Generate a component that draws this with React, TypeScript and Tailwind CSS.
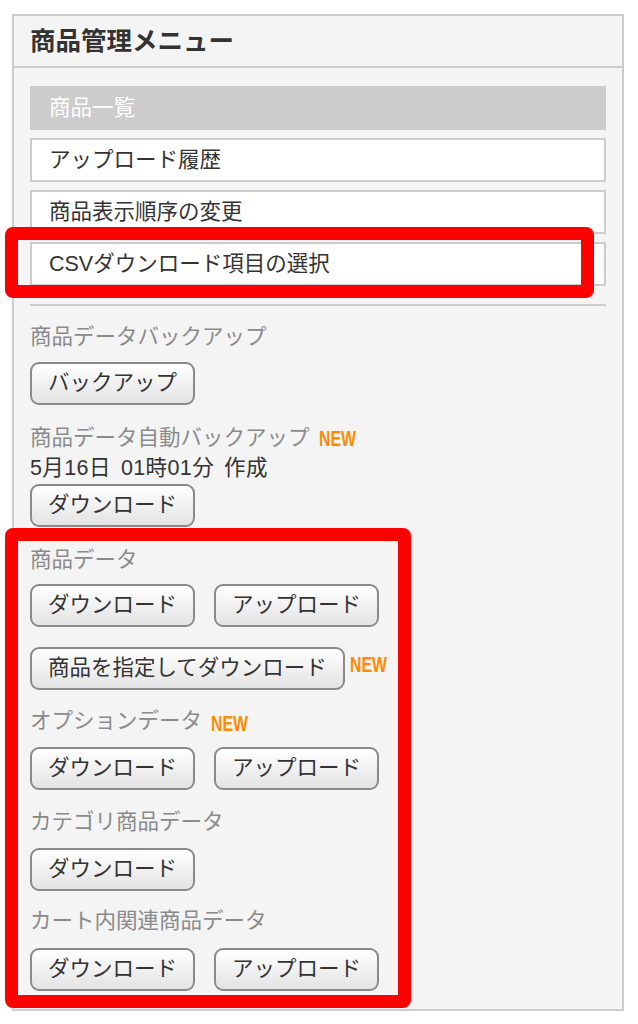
import type { ReactNode } from "react";

const menuItems = ["アップロード履歴", "商品表示順序の変更", "CSVダウンロード項目の選択"];

function Btn({ children }: { children: ReactNode }) {
  return (
    <button className="h-[43px] shrink-0 rounded-[9px] border-2 border-[#8a8a8a] bg-linear-to-b from-white to-[#e3e3e3] px-4 text-[21.5px] leading-none text-[#333]">
      {children}
    </button>
  );
}

function New({ className = "" }: { className?: string }) {
  return (
    <span
      className={`inline-block w-[38px] origin-left scale-x-[0.72] font-['Liberation_Sans',sans-serif] text-[22px] font-bold leading-none text-[#ff8a00] ${className}`}
    >
      NEW
    </span>
  );
}

function Label({ children, className = "" }: { children: ReactNode; className?: string }) {
  return <p className={`text-[21.5px] leading-[30px] text-[#8a8a8a] ${className}`}>{children}</p>;
}

export default function App() {
  return (
    <div className="relative h-[1024px] w-[638px] bg-white pt-[14px] font-['Liberation_Sans','Noto_Sans_CJK_JP',sans-serif]">
      {/* panel */}
      <div className="ml-3 w-[612px] border-2 border-[#cccccc] bg-[#f4f4f4]">
        <div className="flex h-[50px] items-center px-4 text-[25.5px] font-bold text-[#333]">商品管理メニュー</div>
        <div className="border-t-2 border-[#cccccc] px-4 pb-[18px] pt-[18px]">
          {/* menu */}
          <div className="flex flex-col gap-2">
            <div className="flex h-[44px] items-center border-2 border-[#cccccc] bg-[#cccccc] px-[17px] text-[21.5px] text-white">
              商品一覧
            </div>
            {menuItems.map((item) => (
              <div
                key={item}
                className="flex h-[44px] items-center border-2 border-[#cccccc] bg-white px-[17px] text-[21.5px] text-[#333]"
              >
                {item}
              </div>
            ))}
          </div>
          <div className="mt-[18px] h-[2px] bg-[#cccccc]" />

          <Label className="mt-4">商品データバックアップ</Label>
          <div className="mt-[10px] flex">
            <Btn>バックアップ</Btn>
          </div>

          <Label className="mt-[18px] flex items-baseline">
            商品データ自動バックアップ
            <New className="ml-[9px] translate-y-[1px]" />
          </Label>
          <p className="flex text-[21.5px] leading-[30px] tracking-[0.4px] text-[#333]">
            <span>5月16日</span>
            <span className="ml-[10px]">01時01分</span>
            <span className="ml-[10px]">作成</span>
          </p>
          <div className="mt-[1px] flex">
            <Btn>ダウンロード</Btn>
          </div>

          <Label className="mt-[18px]">商品データ</Label>
          <div className="mt-[9px] flex gap-[19px]">
            <Btn>ダウンロード</Btn>
            <Btn>アップロード</Btn>
          </div>
          <div className="mt-5 flex items-center">
            <Btn>商品を指定してダウンロード</Btn>
            <New className="mb-[8px] ml-[5px]" />
          </div>

          <Label className="mt-4 flex items-baseline">
            オプションデータ
            <New className="ml-[9px] translate-y-[3px]" />
          </Label>
          <div className="mt-[11px] flex gap-[19px]">
            <Btn>ダウンロード</Btn>
            <Btn>アップロード</Btn>
          </div>

          <Label className="mt-[17px]">カテゴリ商品データ</Label>
          <div className="mt-[11px] flex">
            <Btn>ダウンロード</Btn>
          </div>

          <Label className="mt-[15px]">カート内関連商品データ</Label>
          <div className="mt-3 flex gap-[19px]">
            <Btn>ダウンロード</Btn>
            <Btn>アップロード</Btn>
          </div>
        </div>
      </div>

      {/* red highlight boxes */}
      <div className="pointer-events-none absolute left-[5px] top-[227px] h-[71px] w-[589px] rounded-lg border-[13px] border-[#ff0000]" />
      <div className="pointer-events-none absolute left-[5px] top-[528px] h-[480px] w-[406px] rounded-lg border-[13px] border-[#ff0000]" />
    </div>
  );
}
